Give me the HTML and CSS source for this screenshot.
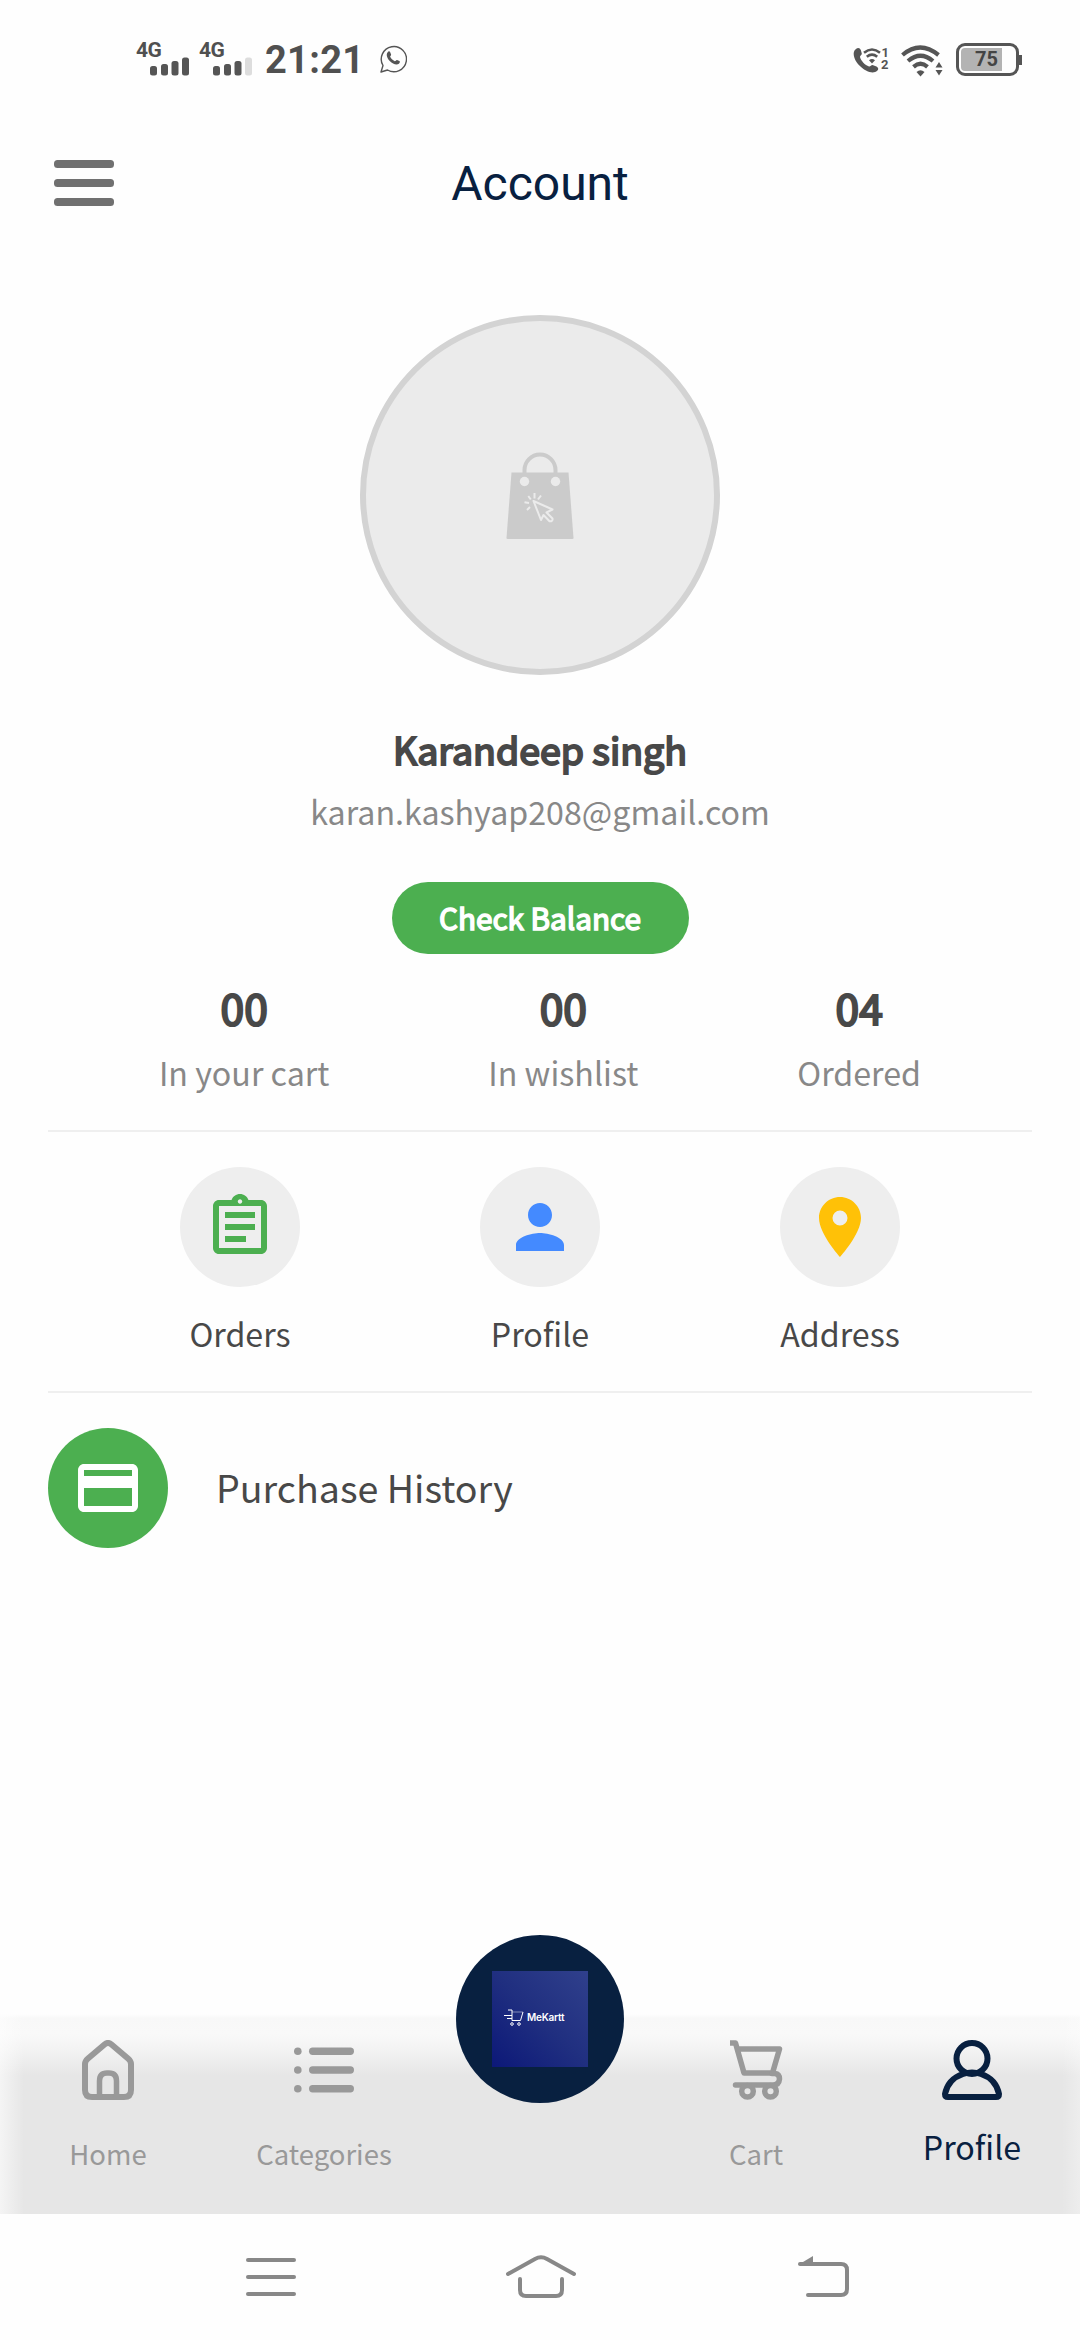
FILE: index.html
```html
<!DOCTYPE html>
<html lang="en">
<head>
<meta charset="utf-8">
<title>Account</title>
<link rel="stylesheet" href="styles.css">
</head>
<body>
<div class="status">
  <div class="status-left">
    <div class="signal"><span class="net">4G</span>
      <svg width="40" height="19" viewBox="0 0 40 19"><g fill="#555"><rect x="0" y="9" width="7" height="9.500" rx="2.500"/><rect x="11" y="7" width="7" height="11.500" rx="2.500"/><rect x="21.500" y="4" width="7" height="14.500" rx="2.500"/><rect x="32" y="0.500" width="7" height="18" rx="2.500"/></g></svg>
    </div>
    <div class="signal"><span class="net">4G</span>
      <svg width="40" height="19" viewBox="0 0 40 19"><g fill="#555"><rect x="0" y="9" width="7" height="9.500" rx="2.500"/><rect x="11" y="7" width="7" height="11.500" rx="2.500"/><rect x="21.500" y="4" width="7" height="14.500" rx="2.500"/><rect x="32" y="0.500" width="7" height="18" rx="2.500" fill="#ddd"/></g></svg>
    </div>
    <span class="clock">21:21</span>
    <svg class="chat" width="28" height="28" viewBox="0 0 28 28"><path d="M2 27l2-6.500A12.600 12.600 0 1 1 8.500 25z" fill="none" stroke="#555" stroke-width="1.400" stroke-linejoin="round"/><path d="M8.500 7.500c1-1.500 2-1.500 2.600-.4l1 2.300c.2.700-.9 1.700-1 2.200.8 2 2.600 3.600 4.700 4.600.7 0 1.500-1.500 2.200-1.300l2.400 1.200c1 .6.300 2-.5 2.700-2.500 2-6.500-.2-8.900-2.600C8.500 13.700 6.700 10 8.500 7.500z" fill="#555"/></svg>
  </div>
  <div class="status-right">
    <svg width="40" height="32" viewBox="0 -4 40 32"><path d="M3 2c2-2 4-1 4.800 1l1 3.500c.2 1.500-1.800 2-1.800 3.400 1 4 5 8 9 9.500 1.500.3 2-1.500 3.500-1.500l4 1.500c2 1 2.300 3 .7 4.400-2.500 2.400-7 2-10.700 0C7 20.500 2 14.500.9 9 .3 6 .8 3.500 3 2z" fill="#555"/><g fill="none" stroke="#555" stroke-width="2.600"><path d="M11 5.800q8-6.600 16 0"/><path d="M13.800 9.800q5.200-4.200 10.400 0"/></g><path d="M16 13.200q3-2.200 6 0l-3 3.300z" fill="#555"/><text class="sim" x="28.500" y="10">1</text><text class="sim" x="28" y="22">2</text></svg>
    <svg width="42" height="32" viewBox="0 0 42 32"><g fill="none" stroke="#555" stroke-width="4.200"><path d="M1.500 10q17.500-15 36 0"/><path d="M7 16q12.500-10.500 25 0"/><path d="M12.500 21.800q7-6 14 0"/></g><path d="M15.500 27q4-3.500 8 0l-4 4.500z" fill="#555"/><path d="M34.500 22.500l3.500-5.500 3.500 5.500zM34.500 25h7L38 30.500z" fill="#555"/></svg>
    <div class="battery"><span class="level">75</span></div>
  </div>
</div>

<header class="appbar">
  <svg width="60" height="46" viewBox="0 0 60 46"><g fill="#707070"><rect width="60" height="8" rx="3.500"/><rect y="19" width="60" height="8" rx="3.500"/><rect y="38" width="60" height="8" rx="3.500"/></g></svg>
  <h1 class="title">Account</h1>
</header>

<main>
  <div class="avatar">
    <svg width="68" height="87" viewBox="0 0 68 87"><path d="M5.500 20.500h57L67.500 86a1 1 0 0 1-1 1h-65a1 1 0 0 1-1-1z" fill="#cbcbcb"/><path d="M18.500 22V18a15.500 15.500 0 0 1 31 0v4" fill="none" stroke="#cbcbcb" stroke-width="4"/><g fill="#ebebeb"><circle cx="18.500" cy="29.500" r="4.700"/><circle cx="49.500" cy="29.500" r="4.700"/></g><g fill="none" stroke="#ebebeb" stroke-width="2"><path d="M27.500 49l19 8.500-6 3 6 6q.5 3-3 2.800L37.500 63 35 68z" stroke-linejoin="round"/><path d="M28.500 46.500v-5.500M24.800 47.500l-2.500-3.500M32 47.500l3-4M23 51l-4.500-.8M24 55l-3 3"/></g></svg>
  </div>
  <div class="name">Karandeep singh</div>
  <div class="email">karan.kashyap208@gmail.com</div>
  <button class="balance">Check Balance</button>

  <section class="stats">
    <div class="stat"><b class="count">00</b><span>In your cart</span></div>
    <div class="stat"><b class="count">00</b><span>In wishlist</span></div>
    <div class="stat"><b class="count">04</b><span>Ordered</span></div>
  </section>

  <section class="actions">
    <div class="action"><div class="disc"><svg width="72" height="72" viewBox="0 0 24 24" fill="#4caf50"><path d="M7 15h7v2H7zm0-4h10v2H7zm0-4h10v2H7zm12-4h-4.180C14.400 1.840 13.300 1 12 1c-1.300 0-2.400.84-2.820 2H5c-1.100 0-2 .9-2 2v14c0 1.100.9 2 2 2h14c1.100 0 2-.9 2-2V5c0-1.100-.9-2-2-2zm-7-.25c.41 0 .75.34.75.75s-.34.75-.75.75-.75-.34-.75-.75.34-.75.75-.75zM19 19H5V5h14v14z"/></svg></div><span>Orders</span></div>
    <div class="action"><div class="disc"><svg width="72" height="72" viewBox="0 0 24 24" fill="#448aff"><path d="M12 12c2.210 0 4-1.790 4-4s-1.790-4-4-4-4 1.790-4 4 1.790 4 4 4zm0 2c-2.670 0-8 1.340-8 4v2h16v-2c0-2.660-5.330-4-8-4z"/></svg></div><span>Profile</span></div>
    <div class="action"><div class="disc"><svg width="72" height="72" viewBox="0 0 24 24" fill="#ffc107"><path d="M12 2C8.130 2 5 5.130 5 9c0 5.250 7 13 7 13s7-7.750 7-13c0-3.870-3.130-7-7-7zm0 9.500a2.500 2.500 0 0 1 0-5 2.500 2.500 0 0 1 0 5z"/></svg></div><span>Address</span></div>
  </section>

  <section class="history">
    <div class="disc green"><svg width="72" height="72" viewBox="0 0 24 24" fill="#fff"><path d="M20 4H4c-1.110 0-1.990.89-1.990 2L2 18c0 1.110.89 2 2 2h16c1.110 0 2-.89 2-2V6c0-1.110-.89-2-2-2zm0 14H4v-6h16v6zm0-10H4V6h16v2z"/></svg></div>
    <span>Purchase History</span>
  </section>
</main>

<nav class="tabs">
  <div class="tab"><svg width="60" height="60" viewBox="0 0 60 60" fill="none" stroke="#999" stroke-width="6"><path d="M7 24Q7 21 10 18.500L26.500 4.500Q30 1.500 33.500 4.500L50 18.500Q53 21 53 24V50Q53 57 46 57H14Q7 57 7 50z"/><path d="M21.500 57V41Q21.500 33 29 33H31Q38.500 33 38.500 41V57" stroke-width="5.500"/></svg><span>Home</span></div>
  <div class="tab"><svg width="60" height="60" viewBox="0 0 60 60" fill="#999"><circle cx="3.800" cy="11.300" r="3.800"/><circle cx="3.800" cy="30" r="3.800"/><circle cx="3.800" cy="48.800" r="3.800"/><rect x="15" y="7.500" width="45" height="7.500" rx="3.700"/><rect x="15" y="26.300" width="45" height="7.500" rx="3.700"/><rect x="15" y="45" width="45" height="7.500" rx="3.700"/></svg><span>Categories</span></div>
  <div class="hub"><div class="logo"><svg width="20" height="17" viewBox="0 0 20 17"><g fill="none" stroke="#fff" stroke-width="1"><path d="M4 1h4v10.500h8.500L19 3"/><path d="M8 3h11" stroke-opacity=".45"/><path d="M0 6.500h8M3 9.500h5"/><circle cx="8" cy="15" r="1.300"/><circle cx="15" cy="15" r="1.300"/></g></svg><span>MeKartt</span></div></div>
  <div class="tab"><svg width="60" height="60" viewBox="0 0 60 60" fill="none" stroke="#999" stroke-width="5.500"><path d="M4 3H9.500L18 33H46.500L53.500 9H12" stroke-linejoin="round"/><path d="M46 33.500H49Q53.500 34 53.500 39 53 45 47 45H9.500" stroke-linecap="round"/><circle cx="21.500" cy="51.200" r="5.800"/><circle cx="44.500" cy="51.200" r="5.800"/></svg><span>Cart</span></div>
  <div class="tab current"><svg width="60" height="60" viewBox="0 0 60 60" fill="none" stroke="#082040" stroke-width="6"><circle cx="30" cy="18.500" r="15.500"/><path d="M21 34Q6 39 3 54Q3 57 6 57H54Q57 57 57 54Q54 39 39 34Q30 31 21 34z" stroke-linejoin="round"/></svg><span>Profile</span></div>
</nav>

<div class="system">
  <svg width="50" height="38" viewBox="0 0 50 38"><g fill="#888"><rect width="50" height="4" rx="2"/><rect y="17" width="50" height="4" rx="2"/><rect y="34" width="50" height="4" rx="2"/></g></svg>
  <svg class="home-key" width="72" height="44" viewBox="0 0 72 44" fill="none" stroke="#888" stroke-width="4" stroke-linecap="round" stroke-linejoin="round"><path d="M3 19L30 4Q36 0.500 42 4L69 19"/><path d="M15 24V35Q15 41 21 41H51Q57 41 57 35V24"/></svg>
  <svg width="51" height="42" viewBox="0 0 51 42"><path d="M2 8H43Q49 8 49 14V33Q49 39 43 39H10" fill="none" stroke="#888" stroke-width="4" stroke-linecap="round"/><path d="M0 9L15 0V9z" fill="#888"/></svg>
</div>
</body>
</html>
```
FILE: styles.css
```css
* { box-sizing: border-box; }
body {
  margin: 0;
  width: 1080px;
  height: 2340px;
  overflow: hidden;
  display: flex;
  flex-direction: column;
  background: #fefefe;
  color: #484848;
  font-family: "Noto Sans CJK SC", "Noto Sans", sans-serif;
}
svg { display: block; flex: none; }

.status {
  height: 120px;
  display: flex;
  justify-content: space-between;
  padding: 0 58px 0 136px;
  font-family: Roboto, sans-serif;
  color: #505050;
}
.status-left { display: flex; }
.signal { width: 63px; padding-top: 40px; }
.signal svg { margin: 0 0 0 14px; }
.net { display: block; height: 17px; line-height: 20px; font-size: 21px; font-weight: 700; letter-spacing: -0.5px; }
.clock { margin-left: 3px; padding-top: 37px; line-height: 46px; font-size: 38px; font-weight: 700; letter-spacing: 0.3px; width: 114px; }
.chat { margin-top: 45px; }
.status-right { display: flex; }
.status-right > svg:first-child { margin: 43px 8px 0 0; }
.status-right > svg:nth-child(2) { margin: 45px 13px 0 0; }
.sim { font: 700 13px Roboto, sans-serif; fill: #555; }
.battery {
  position: relative;
  width: 63px; height: 33px; margin: 43px 3px 0 0;
  border: 3px solid #555; border-radius: 9px; padding: 2px;
}
.battery::after { content: ""; position: absolute; right: -6px; top: 9px; width: 3px; height: 10px; background: #555; }
.level {
  display: block; width: 41px; height: 23px; background: #b3b3b3; border-radius: 4px 0 0 4px;
  padding-left: 14px; font-size: 20px; line-height: 23px; font-weight: 700; color: #444;
}

.appbar {
  height: 126px; padding: 0 54px;
  display: grid; grid-template-columns: 60px 1fr 60px; align-items: center;
}
.title { margin: 0; padding-top: 2px; text-align: center; font: 400 48px/60px Roboto, sans-serif; color: #082040; }

main { height: 1768px; padding-top: 69px; display: flex; flex-direction: column; align-items: center; }
.avatar {
  width: 360px; height: 360px; border-radius: 50%; flex: none;
  border: 6px solid #d3d3d3; background: #ebebeb;
  display: flex; justify-content: center; align-items: center;
}
.name { margin-top: 44px; font-size: 37.5px; line-height: 60px; -webkit-text-stroke: 2px #484848; }
.email { margin-top: 8px; font-size: 32.2px; line-height: 48px; color: #888; }
.balance {
  margin-top: 47px; width: 297px; height: 72px; border: 0; border-radius: 36px; flex: none;
  padding: 0; background: #4caf50; color: #fff;
  font: 400 29.7px/72px "Noto Sans CJK SC", sans-serif; -webkit-text-stroke: 1.5px #fff;
}
.stats { width: 1080px; height: 176px; padding-top: 23px; display: flex; justify-content: space-evenly; color: #888; }
.stat { display: flex; flex-direction: column; align-items: center; font-size: 32.2px; line-height: 48px; }
.count { font-size: 42.5px; line-height: 60px; margin-bottom: 11px; font-weight: 400; color: #484848; -webkit-text-stroke: 2.2px #484848; }
.actions, .history { width: 984px; border-top: 2px solid #efefef; }
.actions { height: 261px; padding: 35px 0 0; display: flex; justify-content: center; gap: 180px; }
.action { width: 120px; display: flex; flex-direction: column; align-items: center; font-size: 32.2px; line-height: 48px; white-space: nowrap; }
.action span { margin-top: 22px; }
.disc { width: 120px; height: 120px; border-radius: 50%; background: #eee; display: flex; justify-content: center; align-items: center; flex: none; }
.green { background: #4caf50; }
.history { padding-top: 35px; display: flex; align-items: center; gap: 48px; font-size: 37.6px; line-height: 60px; }
.history span { padding-bottom: 3px; }

.tabs {
  height: 200px;
  display: grid; grid-template-columns: repeat(5, 216px);
  background:
    linear-gradient(90deg, rgba(254,254,254,.6), rgba(254,254,254,0) 24px, rgba(254,254,254,0) 1062px, rgba(254,254,254,.3)),
    linear-gradient(#fefefe 0, #f8f8f8 4px, #f9f9f9 20px, #f1f1f1 40px, #e6e6e6 62px);
}
.tab { display: flex; flex-direction: column; align-items: center; padding-top: 26px; font-size: 27.5px; line-height: 40px; color: #999; }
.tab span { margin-top: 33px; }
.current { font-size: 32.2px; color: #082040; }
.current span { margin-top: 26px; }
.hub {
  width: 168px; height: 168px; margin: -79px auto 0; border-radius: 50%; background: #082040;
  display: flex; justify-content: center; align-items: center;
}
.logo {
  width: 96px; height: 96px; padding: 0 0 4px 12px; display: flex; align-items: center; gap: 3px;
  background: linear-gradient(225deg, #30408c, #202f80 50%, #0c1878);
  color: #fff; font: 600 10px/12px "Inter", sans-serif; letter-spacing: -0.200px;
}
.system { height: 126px; display: flex; justify-content: space-between; align-items: center; padding: 0 231px 0 246px; }
.home-key { margin-right: 12px; }
```
